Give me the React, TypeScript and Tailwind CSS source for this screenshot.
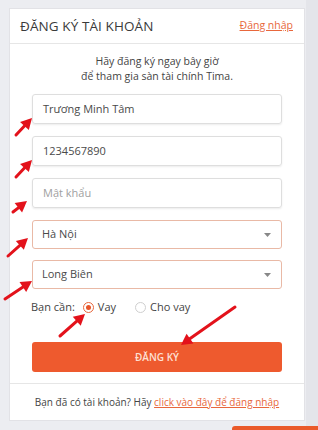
import React from 'react';

// Red annotation arrow pointing from (x1,y1) toward tip (x2,y2)
const Arrow: React.FC<{ x1: number; y1: number; x2: number; y2: number }> = ({ x1, y1, x2, y2 }) => {
    const dx = x2 - x1;
    const dy = y2 - y1;
    const len = Math.sqrt(dx * dx + dy * dy);
    const ux = dx / len;
    const uy = dy / len;
    const head = 11;
    const bx = x2 - ux * head;
    const by = y2 - uy * head;
    const px = -uy * 6;
    const py = ux * 6;
    return (
        <g>
            <line x1={x1} y1={y1} x2={bx + ux * 2} y2={by + uy * 2} stroke="#e3121b" strokeWidth={3} strokeLinecap="round" />
            <polygon points={`${x2},${y2} ${bx + px},${by + py} ${bx - px},${by - py}`} fill="#e3121b" />
        </g>
    );
};

const TextInput: React.FC<{ value?: string; placeholder?: string }> = ({ value, placeholder }) => (
    <div className="h-[30px] border border-[#dedede] rounded-[3px] shadow-[0_1px_2px_rgba(0,0,0,0.08)] flex items-center px-[10px] text-[11px]">
        {value ? <span className="text-[#4a4a4a]">{value}</span> : <span className="text-[#a0a0a0]">{placeholder}</span>}
    </div>
);

const SelectBox: React.FC<{ value: string }> = ({ value }) => (
    <div className="h-[29px] border border-[#e9b9a6] rounded-[3px] flex items-center justify-between pl-[9px] pr-[10px] text-[11px] text-[#4a4a4a]">
        <span>{value}</span>
        <svg width="7" height="4" viewBox="0 0 7 4"><path d="M0 0h7L3.5 4z" fill="#888" /></svg>
    </div>
);

const App: React.FC = () => {
    return (
        <div className="relative w-[318px] h-[430px] overflow-hidden bg-[#ecedf1] font-['Open_Sans',sans-serif]">
            <div className="absolute right-0 top-0 w-[12px] h-full bg-[#e4e5ea]" />
            <div className="relative ml-[9px] mt-[8px] w-[296px] bg-white border border-[#e2e2e6]">
                {/* Header */}
                <div className="h-[35px] flex items-center justify-between pl-[10px] pr-[11px] border-b border-[#e6e6e6]">
                    <span className="text-[13.5px] text-[#3a3a3a] tracking-[0.1px]">ĐĂNG KÝ TÀI KHOẢN</span>
                    <span className="text-[10.5px] text-[#e8673c] underline">Đăng nhập</span>
                </div>

                <div className="px-[22px] pt-[10px] pb-[11px]">
                    <p className="text-center text-[10.5px] leading-[15px] text-[#444]">
                        Hãy đăng ký ngay bây giờ<br />để tham gia sàn tài chính Tima.
                    </p>

                    <div className="mt-[10px] flex flex-col gap-[12px]">
                        <TextInput value="Trương Minh Tâm" />
                        <TextInput value="1234567890" />
                        <TextInput placeholder="Mật khẩu" />
                    </div>
                    <div className="mt-[12px] flex flex-col gap-[11px]">
                        <SelectBox value="Hà Nội" />
                        <SelectBox value="Long Biên" />
                    </div>

                    <div className="mt-[9px] flex items-center text-[11px] text-[#444] h-[18px]">
                        <span className="ml-[-1px]">Bạn cần:</span>
                        <span className="ml-[8px] w-[11px] h-[11px] rounded-full border border-[#e8673c] flex items-center justify-center">
                            <span className="w-[5px] h-[5px] rounded-full bg-[#e8552a]" />
                        </span>
                        <span className="ml-[4px]">Vay</span>
                        <span className="ml-[19px] w-[11px] h-[11px] rounded-full border border-[#cfcfcf]" />
                        <span className="ml-[4px]">Cho vay</span>
                    </div>

                    <button className="mt-[26px] w-full h-[30px] rounded-[3px] bg-[#ee5a2e] text-[#fde0d4] text-[10px] font-semibold">
                        ĐĂNG KÝ
                    </button>
                </div>

                {/* Footer */}
                <div className="border-t border-[#e6e6e6] h-[37px] flex items-center justify-center text-[10px] text-[#444]">
                    <span>Bạn đã có tài khoản? Hãy&nbsp;</span>
                    <span className="text-[#e8673c] underline">click vào đây để đăng nhập</span>
                </div>
            </div>

            <div className="absolute left-[232px] top-[426px] w-[86px] h-[8px] rounded-tl-[3px] bg-[#ea5a2a]" />

            {/* Annotation arrows */}
            <svg className="absolute inset-0 pointer-events-none" width="318" height="430">
                <Arrow x1={16} y1={135} x2={32} y2={118} />
                <Arrow x1={16} y1={177} x2={32} y2={160} />
                <Arrow x1={13} y1={212} x2={27} y2={201} />
                <Arrow x1={8} y1={256} x2={28} y2={238} />
                <Arrow x1={5} y1={299} x2={32} y2={281} />
                <Arrow x1={60} y1={336} x2={85} y2={314} />
                <Arrow x1={235} y1={307} x2={181} y2={345} />
            </svg>
        </div>
    );
};

export default App;
